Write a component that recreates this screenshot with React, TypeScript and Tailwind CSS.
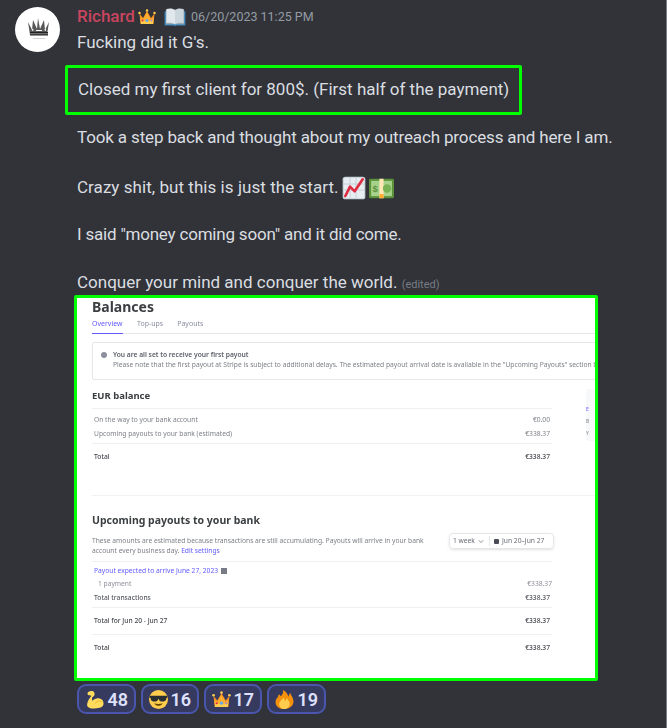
import type { ReactNode } from "react"

const Crown = ({ className }: { className: string }) => (
    <svg viewBox="0 0 36 36" className={className}>
        <path fill="#F19020" d="M3 11l7 9 8-14 8 14 7-9-2 21H5z" />
        <path fill="#FFCC4D" d="M5 23h26l-1 9H6z" />
        <path fill="#FFAC33" d="M4.5 19l6 3L18 9l7.500 13 6-3-1 7H5.500z" />
        <circle fill="#FFCC4D" cx="3" cy="10" r="2.500" />
        <circle fill="#FFCC4D" cx="18" cy="5" r="2.500" />
        <circle fill="#FFCC4D" cx="33" cy="10" r="2.500" />
        <circle fill="#5DADEC" cx="18" cy="25" r="3" />
        <circle fill="#DD2E44" cx="9" cy="25" r="2" />
        <circle fill="#AA8DD8" cx="27" cy="25" r="2" />
    </svg>
)

const Book = () => (
    <svg viewBox="0 0 36 36" className="w-[22px] h-[22px] ml-[8px]">
        <path fill="#3B88C3" d="M1 9h34v23H20l-2 1-2-1H1z" />
        <path fill="#99AAB5" d="M3 6h30v24H3z" />
        <path fill="#E1E8ED" d="M4 5c6-2 11-1 14 2v23c-3-2-8-3-14-2z" />
        <path fill="#CCD6DD" d="M32 5c-6-2-11-1-14 2v23c3-2 8-3 14-2z" />
    </svg>
)

const Chart = () => (
    <svg viewBox="0 0 36 36" className="w-[24px] h-[24px]">
        <rect x="1" y="1" width="34" height="34" rx="4" fill="#CCD6DD" />
        <rect x="3" y="3" width="30" height="30" rx="2" fill="#E8EDF1" />
        <path stroke="#B8C4CC" strokeWidth="1" d="M3 12h30M3 21h30M12 3v30M21 3v30" />
        <path fill="none" stroke="#DD2E44" strokeWidth="4" strokeLinejoin="round" strokeLinecap="round" d="M5 30l7-14 7 7 12-18" />
    </svg>
)

const Money = () => (
    <svg viewBox="0 0 36 36" className="w-[25px] h-[25px]">
        <rect x="0" y="4" width="36" height="28" rx="2" fill="#5C913B" />
        <rect x="3" y="7" width="30" height="22" fill="#A7D28B" />
        <rect x="15" y="4" width="6" height="28" fill="#FFE8B6" />
        <rect x="15" y="26" width="6" height="6" fill="#FFAC33" />
        <circle cx="26" cy="18" r="6" fill="#77B255" />
        <text x="9" y="23" fontSize="14" fontWeight="700" fill="#5C913B" textAnchor="middle" fontFamily="Liberation Sans, sans-serif">$</text>
    </svg>
)

const Muscle = () => (
    <svg viewBox="0 0 36 36" className="w-[19px] h-[19px] shrink-0">
        <path fill="#FFDC5D" d="M13 2c-3 0-7 1-8 3-1 3 1 5 4 5l3 1c-3 5-8 10-8 17 0 5 5 7 11 7 9 0 19-1 20-8 1-8-6-12-13-11-4 1-7 3-8 5l-1-6c2-3 6-4 5-9-1-3-3-4-5-4z" />
        <path fill="#EEC02E" d="M27 20c-6 0-9 5-9 8 2-3 5-6 9-6s6 2 7 4c0-3-3-6-7-6z" />
    </svg>
)

const Cool = () => (
    <svg viewBox="0 0 36 36" className="w-[19px] h-[19px] shrink-0">
        <circle cx="18" cy="18" r="18" fill="#FFCC4D" />
        <path fill="#292F33" d="M1 11h34v3l-2 1c0 5-3 7-8 7-4 0-6-3-7-6-1 3-3 6-7 6-5 0-8-2-8-7l-2-1z" />
        <path fill="#664500" d="M10 25c2 4 5 5 8 5s6-1 8-5c-5 2-11 2-16 0z" />
    </svg>
)

const Fire = () => (
    <svg viewBox="0 0 36 36" className="w-[19px] h-[19px] shrink-0">
        <path fill="#F4900C" d="M35 22c0-8-5-11-6-17-2 3-3 5-3 8-2-5-5-10-11-13 1 6-1 9-4 12-1-2-2-3-4-4 0 6-6 8-6 15 0 8 7 13 17 13s17-6 17-14z" />
        <path fill="#FFCC4D" d="M28 26c0-5-4-7-5-11-2 2-3 4-3 6-2-2-3-4-3-7-3 3-9 7-9 13 0 5 4 9 10 9s10-5 10-10z" />
    </svg>
)

const Reaction = ({ icon, count, width }: { icon: ReactNode; count: number; width: string }) => (
    <div className={`flex items-center justify-between h-[30px] px-[6px] rounded-[9px] border-2 border-[#4a55ad] bg-[#373a5f] ${width}`}>
        {icon}
        <span className="text-[18px] font-semibold text-[#dee0fc]">{count}</span>
    </div>
)

const Row = ({ label, value, className }: { label: string; value: string; className: string }) => (
    <div className={`flex justify-between px-[2px] ${className}`}>
        <span>{label}</span>
        <span>{value}</span>
    </div>
)

function StripeShot() {
    return (
        <div className="-mt-[1px] -ml-[3px] w-[524px] h-[386px] border-[3px] border-[#00ff00] rounded-[2px] bg-white overflow-hidden">
            <div className="w-[560px] pl-[15px] pt-[1px] text-[6.7px] leading-[10px] text-[#7d8088] blur-[0.35px] [font-family:'Noto_Sans',sans-serif]">
                <div className="h-[16px] text-[14px] leading-[16px] font-bold text-[#3c4043]">Balances</div>
                <div className="mt-[4px] w-[503px] h-[15px] flex gap-[14px] border-b border-[#e6e7ea] text-[7px] text-[#8a8ea0]">
                    <span className="h-[15px] w-[31px] border-b border-[#635bff] text-[#635bff]">Overview</span>
                    <span>Top-ups</span>
                    <span>Payouts</span>
                </div>
                <div className="mt-[8px] w-[560px] h-[38px] flex border border-[#e6e7ea] rounded-[2px] pl-[8px] pt-[7px]">
                    <div className="w-[6px] h-[6px] mt-[2px] rounded-full bg-[#8a8f9b]" />
                    <div className="ml-[6px]">
                        <div className="font-semibold text-[#5b5e68]">You are all set to receive your first payout</div>
                        <div className="whitespace-nowrap">Please note that the first payout at Stripe is subject to additional delays. The estimated payout arrival date is available in the "Upcoming Payouts" section below.</div>
                    </div>
                </div>
                <div className="flex">
                    <div className="w-[460px]">
                        <div className="mt-[9px] h-[19px] text-[9.5px] leading-[14px] font-bold text-[#3c4043]">EUR balance</div>
                        <div className="pt-[6px] border-t border-[#eeeff1]">
                            <Row label="On the way to your bank account" value="€0.00" className="h-[14px]" />
                            <Row label="Upcoming payouts to your bank (estimated)" value="€338.37" className="h-[14px]" />
                        </div>
                        <Row label="Total" value="€338.37" className="pt-[8px] border-t border-[#eeeff1] font-medium text-[#45484f]" />
                    </div>
                    <div className="ml-[34px] mt-[9px] w-[24px] h-[52px] bg-[#f7f8f9] rounded-[2px] pt-[14px] text-[5px] leading-[12px]">
                        <div className="text-[#635bff]">E</div>
                        <div>B</div>
                        <div>Y</div>
                    </div>
                </div>
                <div className="mt-[33px] w-[503px] border-t border-[#f1f2f3]" />
                <div className="w-[460px]">
                    <div className="mt-[17px] h-[14px] text-[10.5px] leading-[14px] font-bold text-[#3c4043]">Upcoming payouts to your bank</div>
                    <div className="mt-[9px] flex justify-between items-start">
                        <p className="w-[345px]">
                            These amounts are estimated because transactions are still accumulating. Payouts will arrive in your bank account every business day. <span className="text-[#635bff]">Edit settings</span>
                        </p>
                        <div className="flex items-center h-[16px] w-[105px] -mr-[2px] -mt-[3px] border border-[#e6e7ea] rounded-[4px] shadow-sm text-[#6a6d76] whitespace-nowrap">
                            <span className="flex items-center gap-[3px] w-[40px] pl-[3px] border-r border-[#e6e7ea]">
                                1 week
                                <svg viewBox="0 0 8 8" className="w-[6px] h-[6px]">
                                    <path d="M1 3l3 3 3-3" fill="none" stroke="#6a6d76" strokeWidth="1" />
                                </svg>
                            </span>
                            <span className="ml-[4px] w-[5px] h-[5px] rounded-[1px] bg-[#4b4e57]" />
                            <span className="ml-[3px]">Jun 20–Jun 27</span>
                        </div>
                    </div>
                    <div className="mt-[5px] pt-[4px] h-[14px] border-t border-[#eeeff1] px-[2px] text-[#635bff] flex items-center">
                        Payout expected to arrive June 27, 2023
                        <span className="ml-[3px] w-[6px] h-[6px] bg-[#777b85]" />
                    </div>
                    <Row label="1 payment" value="€338.37" className="mt-[4px] h-[14px] pl-[6px] !pr-0 text-[#8d9098]" />
                    <Row label="Total transactions" value="€338.37" className="h-[14px] font-medium text-[#55585f]" />
                    <Row label="Total for Jun 20 - Jun 27" value="€338.37" className="pt-[8px] h-[27px] border-t border-[#eeeff1] font-medium text-[#45484f]" />
                    <Row label="Total" value="€338.37" className="pt-[8px] border-t border-[#eeeff1] font-medium text-[#45484f]" />
                </div>
            </div>
        </div>
    )
}

function Crownmark() {
    return (
        <svg viewBox="0 0 45 45" className="w-[45px] h-[45px] blur-[0.3px]">
            <path fill="#3a3a3a" opacity="0.85" d="M13 15l4 8 1-10 4 9 1-11 2 11 4-9 1 10 4-8-2 13H15z" />
            <path fill="#fff" d="M17 21.500l2 1.500-2 1zM21 23h6v1h-6zM31 21.500l-2 1.500 2 1z" />
            <path fill="#222" d="M15 25h18v3.500H15z" />
            <path fill="#bbb" d="M15 26.500h18v.7H15z" />
            <path fill="#c8c8c8" d="M18 31h12v.8H18z" />
        </svg>
    )
}

export default function App() {
    return (
        <div className="w-[667px] h-[728px] overflow-hidden bg-[#313338] border-r border-[#7b7f87] flex pl-[15px] pt-[7px] text-[#dbdee1] text-[17px] leading-[23.6px] [font-family:Roboto,sans-serif]">
            <div className="w-[45px] h-[45px] shrink-0 rounded-full bg-white">
                <Crownmark />
            </div>
            <div className="ml-[17px] flex-1">
                <div className="h-[21px] pb-[2px] flex items-center">
                    <span className="text-[17px] font-medium text-[#c9455f]">Richard</span>
                    <Crown className="w-[18px] h-[18px] ml-[3px]" />
                    <Book />
                    <span className="ml-[5px] text-[12.500px] text-[#949ba4]">06/20/2023 11:25 PM</span>
                </div>
                <div className="mt-[3px]">Fucking did it G's.</div>
                <div className="mt-[10px] -ml-[12px] w-[457px] h-[50px] flex items-center pl-[10px] border-[3px] border-[#00ff00] rounded-[2px]">
                    Closed my first client for 800$. (First half of the payment)
                </div>
                <div className="mt-[11px] tracking-[-0.14px]">Took a step back and thought about my outreach process and here I am.</div>
                <div className="mt-[26px] h-[26px] flex items-center gap-[3px] tracking-[0.05px]">
                    Crazy shit, but this is just the start. <Chart /> <Money />
                </div>
                <div className="mt-[22px] tracking-[-0.2px]">I said "money coming soon" and it did come.</div>
                <div className="mt-[24px]">
                    Conquer your mind and conquer the world. <span className="text-[11px] text-[#777c85]">(edited)</span>
                </div>
                <StripeShot />
                <div className="mt-[3px] flex gap-[5px]">
                    <Reaction icon={<Muscle />} count={48} width="w-[59px]" />
                    <Reaction icon={<Cool />} count={16} width="w-[58px]" />
                    <Reaction icon={<Crown className="w-[19px] h-[19px] shrink-0" />} count={17} width="w-[58px]" />
                    <Reaction icon={<Fire />} count={19} width="w-[59px]" />
                </div>
            </div>
        </div>
    )
}
